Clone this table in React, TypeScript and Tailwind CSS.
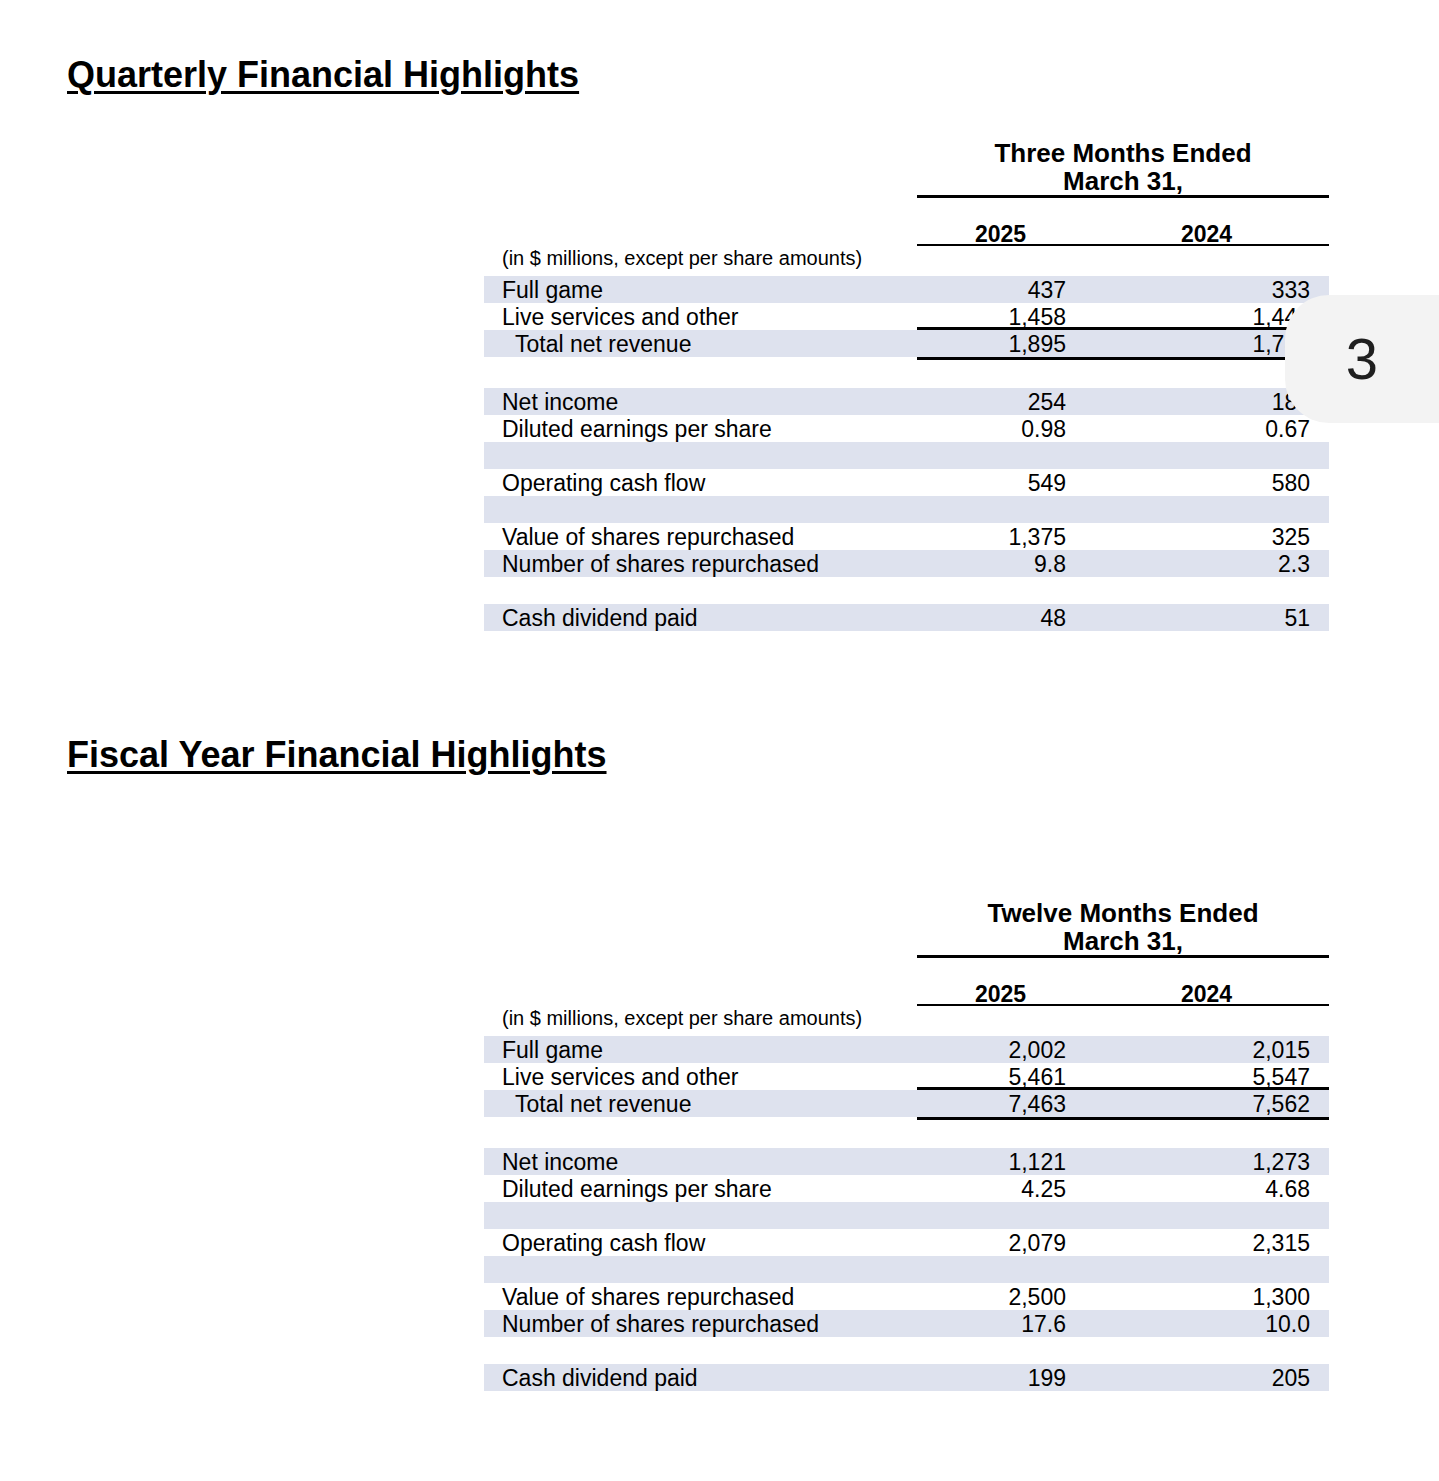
import clsx from "clsx"

type Row = {
  label?: string
  a?: string
  b?: string
  indent?: boolean
  ruleBelow?: boolean
  total?: boolean
}

const quarter: Row[] = [
  { label: "Full game", a: "437", b: "333" },
  { label: "Live services and other", a: "1,458", b: "1,449", ruleBelow: true },
  { label: "Total net revenue", a: "1,895", b: "1,782", indent: true, total: true },
  {},
  { label: "Net income", a: "254", b: "182" },
  { label: "Diluted earnings per share", a: "0.98", b: "0.67" },
  {},
  { label: "Operating cash flow", a: "549", b: "580" },
  {},
  { label: "Value of shares repurchased", a: "1,375", b: "325" },
  { label: "Number of shares repurchased", a: "9.8", b: "2.3" },
  {},
  { label: "Cash dividend paid", a: "48", b: "51" },
]

const fiscal: Row[] = [
  { label: "Full game", a: "2,002", b: "2,015" },
  { label: "Live services and other", a: "5,461", b: "5,547", ruleBelow: true },
  { label: "Total net revenue", a: "7,463", b: "7,562", indent: true, total: true },
  {},
  { label: "Net income", a: "1,121", b: "1,273" },
  { label: "Diluted earnings per share", a: "4.25", b: "4.68" },
  {},
  { label: "Operating cash flow", a: "2,079", b: "2,315" },
  {},
  { label: "Value of shares repurchased", a: "2,500", b: "1,300" },
  { label: "Number of shares repurchased", a: "17.6", b: "10.0" },
  {},
  { label: "Cash dividend paid", a: "199", b: "205" },
]

function HighlightsTable({ period, rows }: { period: string; rows: Row[] }) {
  return (
    <div className="ml-[417px] w-[845px]">
      <div className="flex">
        <div className="w-[433px]" />
        <div className="w-[412px] border-b-[3px] border-black text-center text-[26px] font-bold leading-[28px]">
          <div>{period}</div>
          <div>March 31,</div>
        </div>
      </div>

      <div className="mt-[26.5px] flex">
        <div className="w-[433px]" />
        <div className="flex w-[412px] border-b-[2.5px] border-black text-[23px] font-bold leading-[20px]">
          <div className="w-[167px] text-center">2025</div>
          <div className="w-[245px] text-center">2024</div>
        </div>
      </div>

      <div className="h-[29.5px] pl-[18px] pt-[2px] text-[20px] leading-[20px]">
        (in $ millions, except per share amounts)
      </div>

      {rows.map((r, i) => (
        <div key={i}>
          <div
            className={clsx(
              "flex text-[23px]",
              i === 3 ? "h-[28px]" : "h-[27px]",
              i % 2 === 0 && "bg-[#dee2ee]"
            )}
          >
            <div
              className={clsx(
                "w-[433px] pt-[2.5px] leading-[24.5px] whitespace-nowrap",
                r.indent ? "pl-[31px]" : "pl-[18px]"
              )}
            >
              {r.label}
            </div>
            <div className="flex w-[412px]">
              <div
                className={clsx(
                  "w-[167px] pr-[18px] pt-[2.5px] text-right leading-[24.5px]",
                  r.ruleBelow && "border-b-[3px] border-black"
                )}
              >
                {r.a}
              </div>
              <div
                className={clsx(
                  "w-[245px] pr-[19px] pt-[2.5px] text-right leading-[24.5px]",
                  r.ruleBelow && "border-b-[3px] border-black"
                )}
              >
                {r.b}
              </div>
            </div>
          </div>
          {r.total && (
            <div className="flex">
              <div className="w-[433px]" />
              <div className="h-[3px] w-[412px] bg-black" />
            </div>
          )}
        </div>
      ))}
    </div>
  )
}

export default function App() {
  return (
    <div className="relative min-h-[1481px] w-[1439px] overflow-hidden bg-white pl-[67px] pt-[54.5px] font-['Liberation_Sans',Arial,sans-serif] text-black">
      <h1 className="text-[36px] font-bold leading-[40px] underline decoration-[3px] underline-offset-[4px]">
        Quarterly Financial Highlights
      </h1>
      <div className="mt-[44px]">
        <HighlightsTable period="Three Months Ended" rows={quarter} />
      </div>

      <h1 className="mt-[104px] text-[36px] font-bold leading-[40px] underline decoration-[3px] underline-offset-[4px]">
        Fiscal Year Financial Highlights
      </h1>
      <div className="mt-[124px]">
        <HighlightsTable period="Twelve Months Ended" rows={fiscal} />
      </div>

      {/* page number pill over the right edge */}
      <div className="absolute left-[1285px] top-[295px] flex h-[128px] w-[154px] items-center justify-center rounded-l-[44px] bg-[#f3f3f3]">
        <span className="text-[58px] leading-none text-[#1f1f1f]">3</span>
      </div>
    </div>
  )
}
